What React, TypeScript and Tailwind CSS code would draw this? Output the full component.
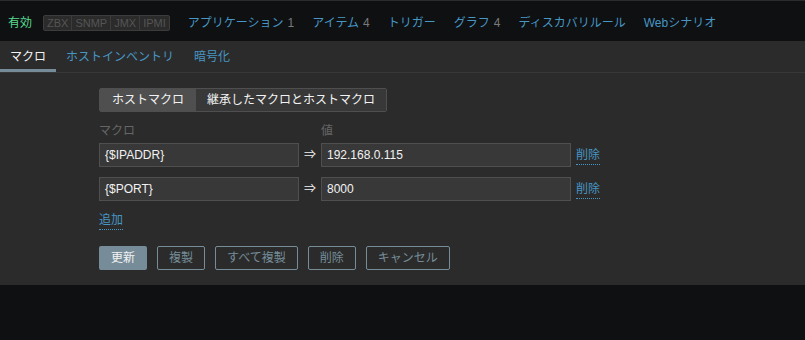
import React from "react";

const font = "font-['Liberation_Sans','Noto_Sans_CJK_JP',sans-serif]";

function TopTab({ label, count }: { label: string; count?: string }) {
  return (
    <div className="px-[9px] flex items-center h-full">
      <span className="text-[#4796c4]">{label}</span>
      {count && <span className="text-[#7a7a7a] ml-[4px]">{count}</span>}
    </div>
  );
}

function OutlineBtn({ children }: { children: React.ReactNode }) {
  return (
    <button className="h-[24px] px-[11px] border border-[#768d99] rounded-[2px] text-[#768d99] leading-[22px]">
      {children}
    </button>
  );
}

function MacroRow({ name, value }: { name: string; value: string }) {
  return (
    <div className="flex items-center h-[24px]">
      <div className="w-[200px] h-[24px] bg-[#383838] border border-[#4f4f4f] pl-[5px] flex items-center text-[#f2f2f2]">
        {name}
      </div>
      <div className="w-[22px] text-center text-[#f2f2f2] text-[12px]">⇒</div>
      <div className="w-[250px] h-[24px] bg-[#383838] border border-[#4f4f4f] pl-[5px] flex items-center text-[#f2f2f2]">
        {value}
      </div>
      <div className="ml-[5px]">
        <span className="text-[#4796c4] border-b border-dotted border-[#4796c4] leading-[14px] inline-block pb-[2px] mt-[2px]">
          削除
        </span>
      </div>
    </div>
  );
}

export default function App() {
  return (
    <div className={`w-[805px] h-[340px] bg-[#0e1012] text-[12px] ${font} overflow-hidden`}>
      {/* top tabs */}
      <div className="h-[41px] border-t border-[#2b2b2b] flex items-center pt-[4px]">
        <span className="ml-[8px] text-[#59db8f]">有効</span>
        <div className="ml-[11px] mr-[9px] flex h-[16px] border border-[#3c3c3c] rounded-[2px] bg-[#2b2b2b] text-[11px] text-[#555] leading-[14px]">
          <span className="px-[3px] border-r border-[#3c3c3c]">ZBX</span>
          <span className="px-[3px] border-r border-[#3c3c3c]">SNMP</span>
          <span className="px-[3px] border-r border-[#3c3c3c]">JMX</span>
          <span className="px-[3px]">IPMI</span>
        </div>
        <TopTab label="アプリケーション" count="1" />
        <TopTab label="アイテム" count="4" />
        <TopTab label="トリガー" />
        <TopTab label="グラフ" count="4" />
        <TopTab label="ディスカバリルール" />
        <TopTab label="Webシナリオ" />
      </div>

      {/* sub tabs */}
      <div className="bg-[#2b2b2b] flex h-[32px] border-b border-[#383838]">
        <div className="px-[10px] flex items-center text-[#f2f2f2] shadow-[inset_0_-3px_0_#768d99]">マクロ</div>
        <div className="px-[10px] flex items-center text-[#4796c4]">ホストインベントリ</div>
        <div className="px-[10px] flex items-center text-[#4796c4]">暗号化</div>
      </div>

      {/* content */}
      <div className="bg-[#2b2b2b] pl-[99px] pt-[15px] pb-[15px]">
        <div className="flex">
          <div className="flex h-[24px] border border-[#4f4f4f] rounded-[2px] overflow-hidden text-[#f2f2f2]">
            <div className="px-[12px] bg-[#4f4f4f] flex items-center">ホストマクロ</div>
            <div className="px-[11px] bg-[#383838] flex items-center">継承したマクロとホストマクロ</div>
          </div>
        </div>
        <div className="flex mt-[12px] h-[14px] leading-[14px] text-[#666]">
          <div className="w-[222px]">マクロ</div>
          <div>値</div>
        </div>
        <div className="mt-[5px] flex flex-col gap-[10px]">
          <MacroRow name="{$IPADDR}" value="192.168.0.115" />
          <MacroRow name="{$PORT}" value="8000" />
        </div>
        <div className="mt-[10px]">
          <span className="inline-block text-[#4796c4] leading-[16px] pb-[1px] border-b border-dotted border-[#4796c4]">追加</span>
        </div>
        <div className="mt-[16px] flex gap-[10px]">
          <button className="h-[24px] px-[12px] bg-[#768d99] rounded-[2px] text-[#f2f2f2]">更新</button>
          <OutlineBtn>複製</OutlineBtn>
          <OutlineBtn>すべて複製</OutlineBtn>
          <OutlineBtn>削除</OutlineBtn>
          <OutlineBtn>キャンセル</OutlineBtn>
        </div>
      </div>
    </div>
  );
}
